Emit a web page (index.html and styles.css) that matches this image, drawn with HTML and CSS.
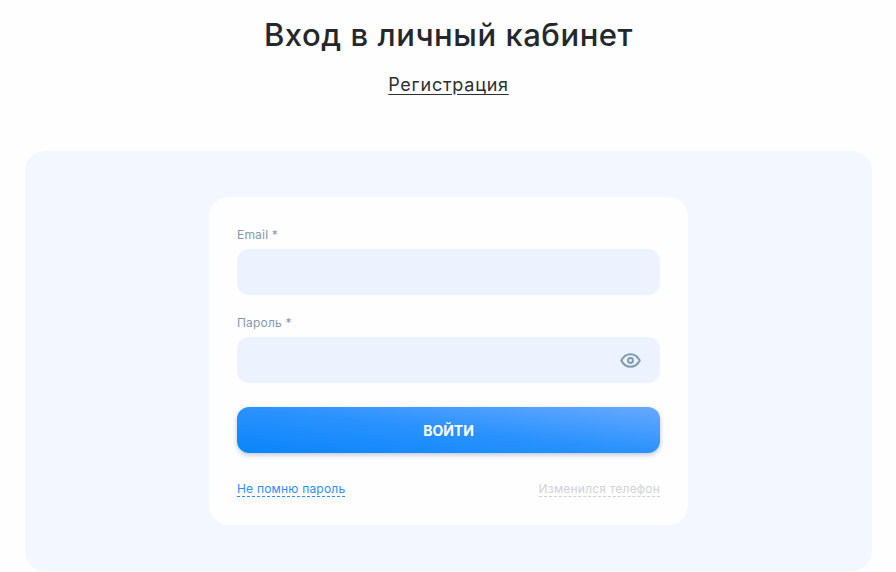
FILE: index.html
```html
<!DOCTYPE html>
<html lang="ru">
<head>
    <meta charset="UTF-8">
    <meta name="viewport" content="width=device-width, initial-scale=1.0">
    <title>Вход в личный кабинет</title>
    <link rel="stylesheet" href="styles.css">
</head>
<body>
    <div class="page">
        <h1>Вход в личный кабинет</h1>
        <a class="register" href="#">Регистрация</a>
        <div class="panel">
            <form class="card">
                <label class="label" for="email">Email *</label>
                <div class="field">
                    <input type="text" id="email" name="email">
                </div>
                <label class="label" for="password">Пароль *</label>
                <div class="field">
                    <input type="password" id="password" name="password">
                    <svg class="eye" width="21" height="15" viewBox="0 0 22 16" fill="none">
                        <path d="M1.2 8C3.2 3.9 6.7 1.3 11 1.3S18.800 3.900 20.800 8C18.800 12.100 15.300 14.700 11 14.700S3.200 12.100 1.200 8Z" stroke="#7f9cb3" stroke-width="2.200"/>
                        <circle cx="11" cy="8" r="2.600" stroke="#7f9cb3" stroke-width="2.200"/>
                    </svg>
                </div>
                <button type="button" class="submit">ВОЙТИ</button>
                <div class="links">
                    <a class="link-blue" href="#">Не помню пароль</a>
                    <a class="link-grey" href="#">Изменился телефон</a>
                </div>
            </form>
        </div>
    </div>
</body>
</html>
```
FILE: styles.css
```css
* {
    box-sizing: border-box;
}
html, body {
    height: 100%;
}
body {
    margin: 0;
    background-color: #fefefe;
    color: #212529;
    font-family: Inter, "Open Sans", sans-serif;
    overflow: hidden;
}
.page {
    display: flex;
    flex-direction: column;
    align-items: center;
    padding: 0 24px 0 25px;
}
h1 {
    margin: 15px 0 0;
    font-size: 31px;
    line-height: 40px;
    font-weight: 500;
    letter-spacing: 0.55px;
    color: #24282c;
}
.register {
    margin-top: 18px;
    font-size: 18px;
    line-height: 24px;
    letter-spacing: 0.75px;
    color: #2b2f33;
    text-decoration: underline;
    text-underline-offset: 3px;
}
.panel {
    width: 100%;
    height: 420px;
    margin-top: 54px;
    padding-top: 46px;
    background-color: #f3f7ff;
    border-radius: 20px;
    display: flex;
    justify-content: center;
    align-items: flex-start;
}
.card {
    width: 479px;
    height: 328px;
    padding: 29px 28px 0;
    background-color: #fefefe;
    border-radius: 20px;
}
.label {
    display: block;
    height: 23px;
    font-size: 12px;
    line-height: 18px;
    letter-spacing: 0.2px;
    color: #8499ad;
}
.field {
    position: relative;
    height: 46px;
    margin-bottom: 19px;
}
.field input {
    display: block;
    width: 100%;
    height: 100%;
    border: none;
    outline: none;
    border-radius: 12px;
    background-color: #ecf2fe;
}
.eye {
    position: absolute;
    right: 19px;
    top: 16px;
}
.submit {
    display: block;
    width: 100%;
    height: 46px;
    margin-top: 24px;
    border: none;
    border-radius: 12px;
    background: linear-gradient(to top right, #0a84fb 0%, #2a92fd 50%, #67a9ff 100%);
    box-shadow: 0 2px 5px rgba(40, 70, 120, 0.3);
    color: #fff;
    font-family: inherit;
    font-size: 14px;
    font-weight: 700;
    letter-spacing: 0;
}
.links {
    display: flex;
    justify-content: space-between;
    margin-top: 28px;
    font-size: 12px;
    line-height: 15px;
    letter-spacing: 0.2px;
}
.links a {
    text-decoration: none;
    border-bottom: 1px dashed;
}
.link-blue {
    color: #2b8ffb;
}
.link-grey {
    color: #cfd2d6;
}
```
